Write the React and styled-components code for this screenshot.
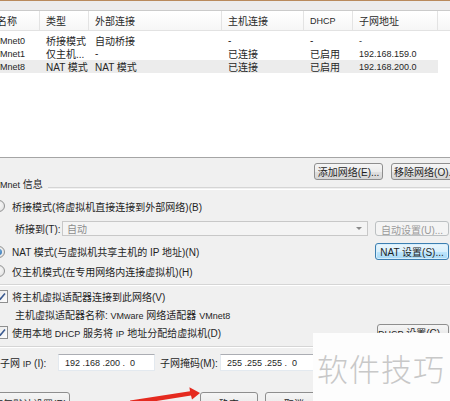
import React from 'react';
import styled, { createGlobalStyle, css } from 'styled-components';

const GlobalStyle = createGlobalStyle`
  html, body {
    margin: 0;
    padding: 0;
  }
  body {
    background: #f0f0f0;
    font-family: "Liberation Sans", "Noto Sans CJK SC", sans-serif;
    font-size: 10px;
    color: #1f1f1f;
    overflow: hidden;
  }
  #root {
    width: 450px;
    height: 401px;
    overflow: hidden;
    position: relative;
  }
`;

const Lat = styled.span`
  font-size: 9px;
`;

const Dialog = styled.div`
  margin-left: -8px;
  width: 458px;
  height: 401px;
  display: flex;
  flex-direction: column;
`;

const TopEdge = styled.div`
  height: 1px;
  background: #b98a5c;
  flex-shrink: 0;
`;

const TopGap = styled.div`
  height: 9px;
  background: #ececec;
  flex-shrink: 0;
`;

/* ---------- network list ---------- */
const List = styled.div`
  height: 146px;
  flex-shrink: 0;
  background: #fff;
  border-top: 1px solid #cbcbcb;
  border-bottom: 1px solid #a5a5a5;
  width: 470px;
`;

const cols = '48px 49px 133px 82px 49px 85px';

const HeaderRow = styled.div`
  display: grid;
  grid-template-columns: ${cols} 1fr;
  height: 19px;
  border-bottom: 1px solid #e2e2e2;
  background: linear-gradient(#ffffff, #f6f6f6);
`;

const HeadCell = styled.div`
  display: flex;
  align-items: center;
  padding-left: ${p => (p.$first ? 5 : 6)}px;
  border-right: 1px solid #e3e3e3;
  font-size: 10px;
  color: #2a2a2a;
  white-space: nowrap;
  overflow: hidden;
`;

const Rows = styled.div`
  padding-top: 3px;
`;

const DataRow = styled.div`
  display: grid;
  grid-template-columns: ${cols};
  width: 446px;
  height: 13px;
  background: ${p => (p.$selected ? '#ececec' : 'transparent')};
`;

const Cell = styled.div`
  display: flex;
  align-items: center;
  padding-left: ${p => (p.$first ? 2 : 6)}px;
  white-space: nowrap;
  overflow: hidden;
  color: #262626;
`;

/* ---------- buttons ---------- */
const Toolbar = styled.div`
  display: flex;
  justify-content: flex-end;
  gap: 8px;
  margin-top: 5px;
  margin-right: -10px;
  height: 17px;
  flex-shrink: 0;
`;

const Button = styled.button`
  box-sizing: border-box;
  height: ${p => p.$h || 17}px;
  width: ${p => p.$w}px;
  flex-shrink: 0;
  padding: 0;
  font: inherit;
  font-size: 10px;
  color: #1f1f1f;
  border: 1px solid #8e8e8e;
  border-radius: 3px;
  background: linear-gradient(#f5f5f5 0%, #ececec 50%, #e0e0e0 51%, #d6d6d6 100%);
  white-space: nowrap;
  overflow: hidden;

  ${p => p.$primary && css`
    border-color: #3c7fb1;
    background: linear-gradient(#eaf6fd 0%, #d9f0fc 50%, #bee6fd 51%, #a7d9f5 100%);
    box-shadow: inset 0 0 0 1px #d8eefb;
  `}

  ${p => p.$disabled && css`
    color: #9a9a9a;
    border-color: #bcc0c2;
    background: #f4f4f4;
  `}
`;

/* ---------- vmnet info group ---------- */
const Legend = styled.div`
  display: flex;
  align-items: flex-end;
  height: 12px;
  padding-left: 2px;
  flex-shrink: 0;
  line-height: 12px;
  margin-top: -1px;

  &::after {
    content: '';
    flex: 1;
    margin-left: 5px;
    margin-bottom: 1px;
    height: 1px;
    border-top: 1px solid #d5d5d5;
    border-bottom: 1px solid #ffffff;
  }
`;

const Group = styled.div`
  display: flex;
  flex-direction: column;
  padding: 0 1px 0 1px;
`;

const Row = styled.div`
  display: flex;
  align-items: center;
  flex-shrink: 0;
  height: ${p => p.$h || 16}px;
  margin-top: ${p => p.$mt || 0}px;
  padding-left: ${p => p.$indent || 0}px;
  gap: ${p => p.$gap || 0}px;
  white-space: nowrap;
`;

const Radio = styled.span`
  box-sizing: border-box;
  width: 12px;
  height: 12px;
  border-radius: 50%;
  border: 1px solid #8f9091;
  background: radial-gradient(circle at 40% 40%, #fdfdfd, #dcdcdc);
  display: inline-flex;
  align-items: center;
  justify-content: center;
  flex-shrink: 0;

  ${p => p.$on && css`
    &::after {
      content: '';
      width: 6px;
      height: 6px;
      border-radius: 50%;
      background: radial-gradient(circle at 35% 35%, #8cc8f0, #1d5ea6);
    }
  `}
`;

const Box = styled.span`
  box-sizing: border-box;
  width: 13px;
  height: 13px;
  border: 1px solid #8e8f8f;
  background: linear-gradient(135deg, #e8e8e8, #fdfdfd);
  display: inline-flex;
  align-items: center;
  justify-content: center;
  flex-shrink: 0;
`;

const Check = () => (
  <Box>
    <svg width="9" height="9" viewBox="0 0 9 9">
      <path d="M1 4.6 L3.4 7 L8 1.6" fill="none" stroke="#3b5a8f" strokeWidth="1.6" />
    </svg>
  </Box>
);

const Spacer = styled.div`
  flex: ${p => (p.$w ? 'none' : 1)};
  width: ${p => (p.$w ? `${p.$w}px` : 'auto')};
`;

const FieldLabel = styled.span`
  width: ${p => p.$w}px;
  margin-left: ${p => p.$ml || 0}px;
  flex-shrink: 0;
`;

const Select = styled.div`
  flex: 1;
  box-sizing: border-box;
  height: 15px;
  margin-right: 7px;
  border: 1px solid #c8c8c8;
  background: #f4f4f4;
  color: #8c8c8c;
  display: flex;
  align-items: center;
  padding: 0 5px 0 4px;

  &::after {
    content: '';
    margin-left: auto;
    border-left: 3px solid transparent;
    border-right: 3px solid transparent;
    border-top: 3px solid #8a8a8a;
  }
`;

const Separator = styled.div`
  margin-top: 5px;
  height: 0;
  border-top: 1px solid #d5d5d5;
  border-bottom: 1px solid #ffffff;
  flex-shrink: 0;
`;

const IpInput = styled.div`
  box-sizing: border-box;
  width: ${p => p.$w}px;
  height: 17px;
  flex-shrink: 0;
  background: #fff;
  border: 1px solid #e3e9ef;
  border-top-color: #abadb3;
  display: flex;
  align-items: center;
  padding-left: 6px;
  white-space: pre;
`;

const BottomBar = styled.div`
  display: flex;
  align-items: flex-start;
  gap: 7px;
  margin-top: 21px;
  margin-left: -2px;
  height: 22px;
  flex-shrink: 0;
`;

/* ---------- overlays ---------- */
const Watermark = styled.div`
  position: absolute;
  left: 313px;
  top: 333px;
  width: 137px;
  height: 68px;
  background: #fdfdfd;
  display: flex;
  align-items: center;
  padding-left: 4px;
  box-sizing: border-box;
  font-family: "Noto Sans CJK SC", sans-serif;
  font-weight: 300;
  font-size: 31px;
  letter-spacing: 1px;
  color: #c8c8c8;
  white-space: nowrap;
`;

const ArrowMark = styled.svg`
  position: absolute;
  left: 130px;
  top: 384px;
`;

const networks = [
  { name: 'VMnet0', type: '桥接模式', ext: '自动桥接', host: '-', dhcp: '-', subnet: '-' },
  { name: 'VMnet1', type: '仅主机...', ext: '-', host: '已连接', dhcp: '已启用', subnet: '192.168.159.0' },
  { name: 'VMnet8', type: 'NAT 模式', ext: 'NAT 模式', host: '已连接', dhcp: '已启用', subnet: '192.168.200.0', selected: true },
];

export default function App() {
  return (
    <>
      <GlobalStyle />
      <Dialog>
        <TopEdge />
        <TopGap />
        <List>
          <HeaderRow>
            <HeadCell $first>名称</HeadCell>
            <HeadCell>类型</HeadCell>
            <HeadCell>外部连接</HeadCell>
            <HeadCell>主机连接</HeadCell>
            <HeadCell><Lat>DHCP</Lat></HeadCell>
            <HeadCell>子网地址</HeadCell>
            <HeadCell />
          </HeaderRow>
          <Rows>
            {networks.map(n => (
              <DataRow key={n.name} $selected={n.selected}>
                <Cell $first><Lat>{n.name}</Lat></Cell>
                <Cell>{n.type}</Cell>
                <Cell>{n.ext}</Cell>
                <Cell>{n.host}</Cell>
                <Cell>{n.dhcp}</Cell>
                <Cell><Lat>{n.subnet}</Lat></Cell>
              </DataRow>
            ))}
          </Rows>
        </List>

        <Toolbar>
          <Button $w={69}>添加网络(E)...</Button>
          <Button $w={69}>移除网络(O)...</Button>
        </Toolbar>

        <Legend><Lat>VMnet</Lat>&nbsp;信息</Legend>

        <Group>
          <Row $mt={7} $gap={7}>
            <Radio />
            <span>桥接模式(将虚拟机直接连接到外部网络)(B)</span>
          </Row>
          <Row $mt={7} $h={15} $indent={22}>
            <FieldLabel $w={47}>桥接到(T):</FieldLabel>
            <Select>自动</Select>
            <Button $w={74} $h={15} $disabled>自动设置(U)...</Button>
          </Row>
          <Row $mt={7} $h={17} $gap={7}>
            <Radio $on />
            <span>NAT 模式(与虚拟机共享主机的 IP 地址)(N)</span>
            <Spacer />
            <Button $w={74} $primary>NAT 设置(S)...</Button>
          </Row>
          <Row $mt={3} $gap={7}>
            <Radio />
            <span>仅主机模式(在专用网络内连接虚拟机)(H)</span>
          </Row>
        </Group>

        <Separator />

        <Group>
          <Row $mt={2} $indent={2} $gap={4}>
            <Check />
            <span>将主机虚拟适配器连接到此网络(V)</span>
          </Row>
          <Row $mt={2} $indent={22}>
            <span>主机虚拟适配器名称: <Lat>VMware</Lat> 网络适配器 <Lat>VMnet8</Lat></span>
          </Row>
          <Row $mt={2} $h={17} $indent={2} $gap={4}>
            <Check />
            <span>使用本地 <Lat>DHCP</Lat> 服务将 <Lat>IP</Lat> 地址分配给虚拟机(D)</span>
            <Spacer />
            <Button $w={72}><Lat>DHCP</Lat> 设置(C)...</Button>
          </Row>
        </Group>

        <Separator />

        <Row $mt={6} $h={17} $indent={8}>
          <FieldLabel $w={58}>子网 <Lat>IP</Lat> (I):</FieldLabel>
          <IpInput $w={97}><Lat>192 .168 .200 .  0</Lat></IpInput>
          <FieldLabel $w={60} $ml={5}>子网掩码(M):</FieldLabel>
          <IpInput $w={100}><Lat>255 .255 .255 .  0</Lat></IpInput>
        </Row>

        <BottomBar>
          <Button $w={80} $h={22}>恢复默认设置(R)</Button>
          <Spacer $w={116} />
          <Button $w={58} $h={22}>确定</Button>
          <Button $w={58} $h={22}>取消</Button>
        </BottomBar>
      </Dialog>

      <ArrowMark width="75" height="20" viewBox="0 0 75 20">
        <polygon
          points="0,16.5 60,7.3 59.4,3.2 70,9 62,15.5 61,11.6 1,21"
          fill="#e52a1f"
        />
      </ArrowMark>
      <Watermark>软件技巧</Watermark>
    </>
  );
}
